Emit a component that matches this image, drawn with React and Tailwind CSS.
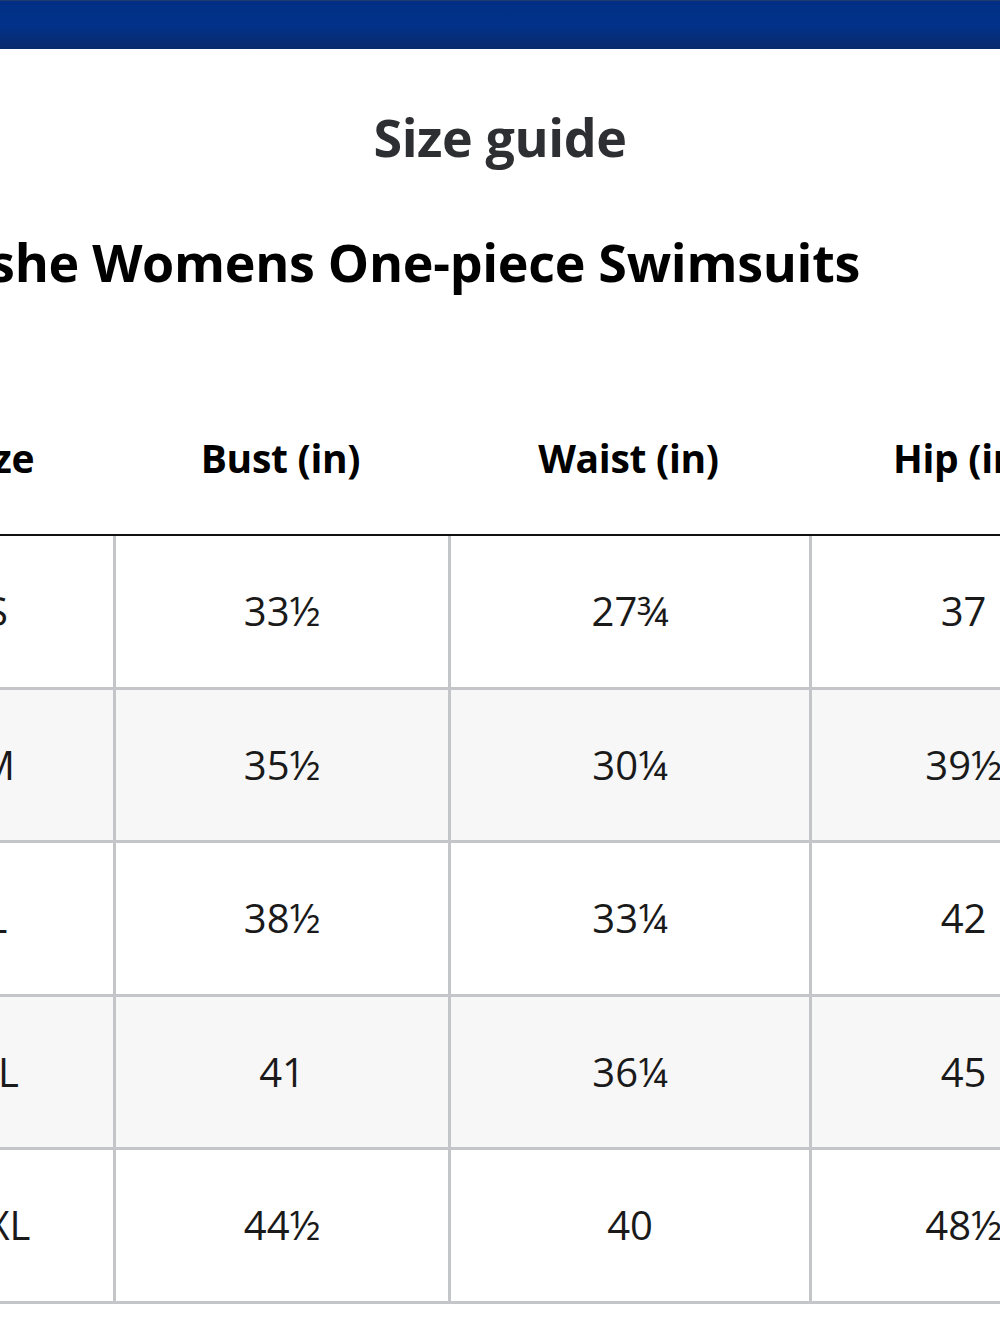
const rows = [
  { size: "S", bust: "33½", waist: "27¾", hip: "37" },
  { size: "M", bust: "35½", waist: "30¼", hip: "39½" },
  { size: "L", bust: "38½", waist: "33¼", hip: "42" },
  { size: "XL", bust: "41", waist: "36¼", hip: "45" },
  { size: "2XL", bust: "44½", waist: "40", hip: "48½" },
];

const cols = "grid grid-cols-[232px_335px_361px_306px]";

export default function App() {
  return (
    <div className="w-full min-h-screen overflow-hidden bg-white font-['Open_Sans',sans-serif] text-black">
      <div className="h-[49px] bg-linear-to-b from-[#022f84] via-[#01328a] to-[#0a2a6c] border-t border-[#1d3d6e]" />

      <div className="h-[176px] flex items-center justify-center">
        <h1 className="text-[52px] font-bold tracking-[-0.4px] text-[#2e2f32] leading-none">Size guide</h1>
      </div>

      <div className="h-[74px] flex items-center justify-end pr-[140px] whitespace-nowrap">
        <h2 className="text-[52px] font-bold leading-none tracking-[-0.3px]">she Womens One-piece Swimsuits</h2>
      </div>

      <div className="ml-[-119px] w-[1234px] mt-[83px]">
        <div className={`${cols} h-[154px] border-b-2 border-[#111]`}>
          {["Size", "Bust (in)", "Waist (in)", "Hip (in)"].map((h) => (
            <div key={h} className="flex items-center justify-center text-[39px] font-bold tracking-[-0.3px]">
              {h}
            </div>
          ))}
        </div>

        {rows.map((r, i) => (
          <div
            key={r.size}
            className={`${cols} h-[153.5px] border-b-[3px] border-[#c4c5c8] ${i % 2 === 1 ? "bg-[#f7f7f7]" : "bg-white"}`}
          >
            <div className="flex items-center justify-center text-[40px] text-[#1a1a1a]">{r.size}</div>
            <div className="flex items-center justify-center border-l-[3px] border-[#c4c5c8] text-[40px] text-[#1a1a1a]">{r.bust}</div>
            <div className="flex items-center justify-center border-l-[3px] border-[#c4c5c8] text-[40px] text-[#1a1a1a]">{r.waist}</div>
            <div className="flex items-center justify-center border-l-[3px] border-[#c4c5c8] text-[40px] text-[#1a1a1a]">{r.hip}</div>
          </div>
        ))}
      </div>
    </div>
  );
}
